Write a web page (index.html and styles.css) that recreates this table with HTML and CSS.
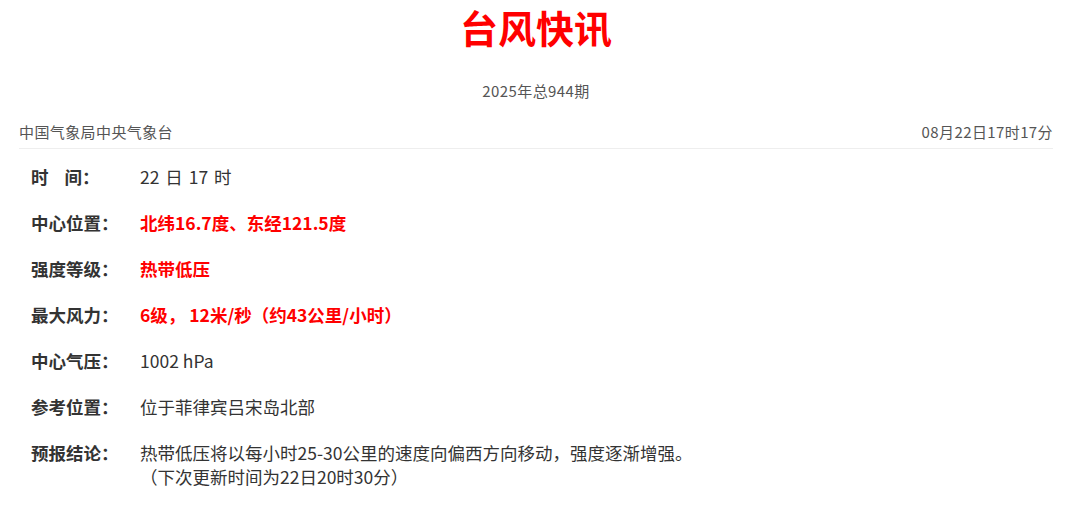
FILE: index.html
```html
<!DOCTYPE html>
<html lang="zh-CN">
<head>
<meta charset="utf-8">
<link rel="stylesheet" href="styles.css">
</head>
<body>
<div class="page">
  <h1 class="title">台风快讯</h1>
  <div class="issue">2025年总944期</div>
  <div class="meta">
    <span>中国气象局中央气象台</span>
    <span>08月22日17时17分</span>
  </div>
  <div class="rows">
    <div class="row"><div class="label">时<span class="gap"></span>间：</div><div class="value spaced">22 日 17 时</div></div>
    <div class="row"><div class="label">中心位置：</div><div class="value red">北纬16.7度、东经121.5度</div></div>
    <div class="row"><div class="label">强度等级：</div><div class="value red">热带低压</div></div>
    <div class="row"><div class="label">最大风力：</div><div class="value red">6级， 12米/秒（约43公里/小时）</div></div>
    <div class="row"><div class="label">中心气压：</div><div class="value">1002 hPa</div></div>
    <div class="row"><div class="label">参考位置：</div><div class="value">位于菲律宾吕宋岛北部</div></div>
    <div class="row"><div class="label">预报结论：</div><div class="value">热带低压将以每小时25-30公里的速度向偏西方向移动，强度逐渐增强。<br>（下次更新时间为22日20时30分）</div></div>
  </div>
</div>
</body>
</html>
```
FILE: styles.css
```css
html, body {
  margin: 0;
  padding: 0;
  background: #fff;
}
body {
  font-family: "Noto Sans CJK SC", "Noto Sans", sans-serif;
  color: #333;
}
.page {
  padding: 0 27px 0 19px;
}
.title {
  margin: 0;
  padding-top: 5px;
  height: 47px;
  line-height: 44px;
  text-align: center;
  font-size: 38px;
  font-weight: 700;
  color: #ff0000;
}
.issue {
  margin-top: 29px;
  text-align: center;
  font-size: 15px;
  letter-spacing: 0.4px;
  line-height: 20px;
  color: #555;
}
.meta {
  margin-top: 21px;
  display: flex;
  justify-content: space-between;
  font-size: 15px;
  letter-spacing: 0.4px;
  line-height: 20px;
  color: #555;
  padding-bottom: 6px;
  border-bottom: 1px solid #eee;
}
.rows {
  display: flex;
  flex-direction: column;
  gap: 22px;
  padding-top: 16px;
  padding-left: 12px;
}
.row {
  display: flex;
  font-size: 17.5px;
  line-height: 24px;
}
.label {
  width: 109px;
  flex: none;
  font-weight: 700;
  color: #333;
}
.gap {
  display: inline-block;
  width: 16px;
}
.value {
  color: #333;
}
.spaced {
  word-spacing: 2px;
}
.red {
  color: #ff0000;
  font-weight: 700;
}
```
